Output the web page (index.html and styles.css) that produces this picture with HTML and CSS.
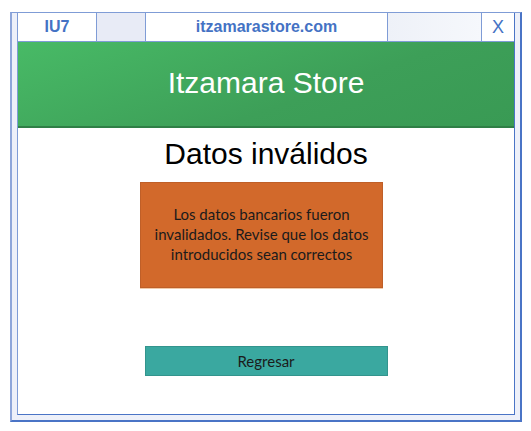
FILE: index.html
```html
<!DOCTYPE html>
<html lang="es">
<head>
<meta charset="utf-8">
<title>Itzamara Store</title>
<link rel="stylesheet" href="styles.css">
</head>
<body>
<div class="frame">
  <div class="window">
    <div class="topbar">
      <div class="cell cell-id">IU7</div>
      <div class="cell cell-blank1"></div>
      <div class="cell cell-url">itzamarastore.com</div>
      <div class="cell cell-blank2"></div>
      <div class="cell cell-close">X</div>
    </div>
    <div class="header">Itzamara Store</div>
    <div class="content">
      <h1 class="title">Datos inválidos</h1>
      <div class="alert">Los datos bancarios fueron invalidados. Revise que los datos introducidos sean correctos</div>
      <div class="button">Regresar</div>
    </div>
  </div>
</div>
</body>
</html>
```

FILE: styles.css
```css
* { box-sizing: border-box; }
html, body { margin: 0; padding: 0; background: #fff; }
body { width: 531px; height: 431px; overflow: hidden; font-family: "Liberation Sans", Arial, sans-serif; }

.frame {
  margin: 12px 0 0 10px;
  width: 512px;
  height: 410px;
  border: 2px solid #4a74c6;
  border-left-color: #8ea6da;
  border-top: 1px solid #7f9cd6;
  padding: 0 5px 5px 5px;
  background: #edf0f9;
  display: flex;
}
.window {
  flex: 1;
  background: #fff;
  border: 1px solid #4a74c6;
  border-left-color: #7f9cd6;
  border-top: none;
  display: flex;
  flex-direction: column;
}

.topbar {
  display: flex;
  height: 29px;
  border-bottom: 1px solid #7f9cd6;
}
.cell {
  display: flex;
  align-items: center;
  justify-content: center;
  border-right: 1px solid #7f9cd6;
  color: #4472c4;
  font-size: 16px;
  font-weight: bold;
}
.cell-id { width: 79px; }
.cell-blank1 { width: 49px; background: #e8ebf6; }
.cell-url { width: 242px; }
.cell-blank2 { width: 94px; background: linear-gradient(90deg, #eef1f8, #f6f8fc); }
.cell-close { flex: 1; border-right: none; font-weight: normal; font-size: 18px; }

.header {
  height: 86px;
  background: linear-gradient(160deg, #48ba66 0%, #3d9f58 60%, #399a54 100%);
  border-bottom: 2px solid #2f7f46;
  color: #fff;
  font-size: 30px;
  display: flex;
  align-items: center;
  justify-content: center;
  padding-bottom: 2px;
}

.content {
  display: flex;
  flex-direction: column;
  align-items: center;
}
.title {
  margin: 8px 0 0 0;
  font-weight: normal;
  font-size: 30px;
  line-height: 36px;
  color: #000;
}
.alert {
  margin: 10px 9px 0 0;
  width: 243px;
  height: 106px;
  background: #d2692b;
  border: 1px solid #bf5f28;
  box-shadow: 0 1px 0 #f1c9a8;
  color: #1b1b1b;
  font-family: Lato, "Open Sans", sans-serif;
  font-size: 15px;
  line-height: 20px;
  text-align: center;
  display: flex;
  align-items: center;
  justify-content: center;
  padding: 0 8px 2px;
}
.button {
  margin-top: 58px;
  width: 243px;
  height: 30px;
  background: #3aa8a0;
  border: 1px solid #33948d;
  color: #1b1b1b;
  font-family: Lato, "Open Sans", sans-serif;
  font-size: 15px;
  display: flex;
  align-items: center;
  justify-content: center;
}
```
